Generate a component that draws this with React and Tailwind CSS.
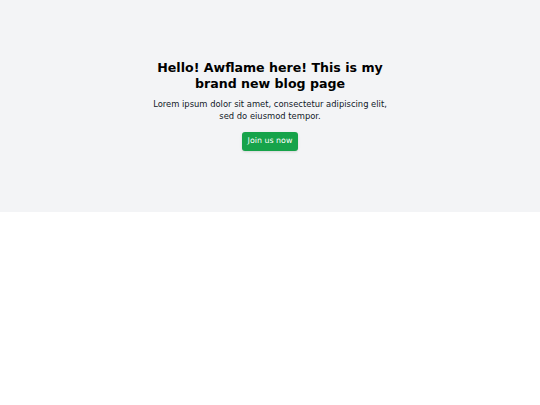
export default function App() {
  return (
    <div className="min-h-screen bg-white" style={{ fontFamily: '"DejaVu Sans", sans-serif' }}>
      {/* Hero */}
      <section className="flex h-[212px] items-center justify-center bg-gray-100">
        <div className="mx-auto mb-[2px] max-w-[244px] text-center">
          <h1 className="text-[12.6px] font-bold leading-[16px] text-black">
            Hello! Awflame here! This is my brand new blog page
          </h1>
          <p className="mt-[6px] text-[8.4px] leading-[12px] text-[#111827]">
            Lorem ipsum dolor sit amet, consectetur adipiscing elit, sed do eiusmod tempor.
          </p>
          <button
            type="button"
            className="mt-[10px] h-[19px] rounded-[3px] bg-[#16a34a] px-[6px] text-[7.9px] leading-[10px] text-white shadow-sm"
          >
            Join us now
          </button>
        </div>
      </section>
    </div>
  );
}
